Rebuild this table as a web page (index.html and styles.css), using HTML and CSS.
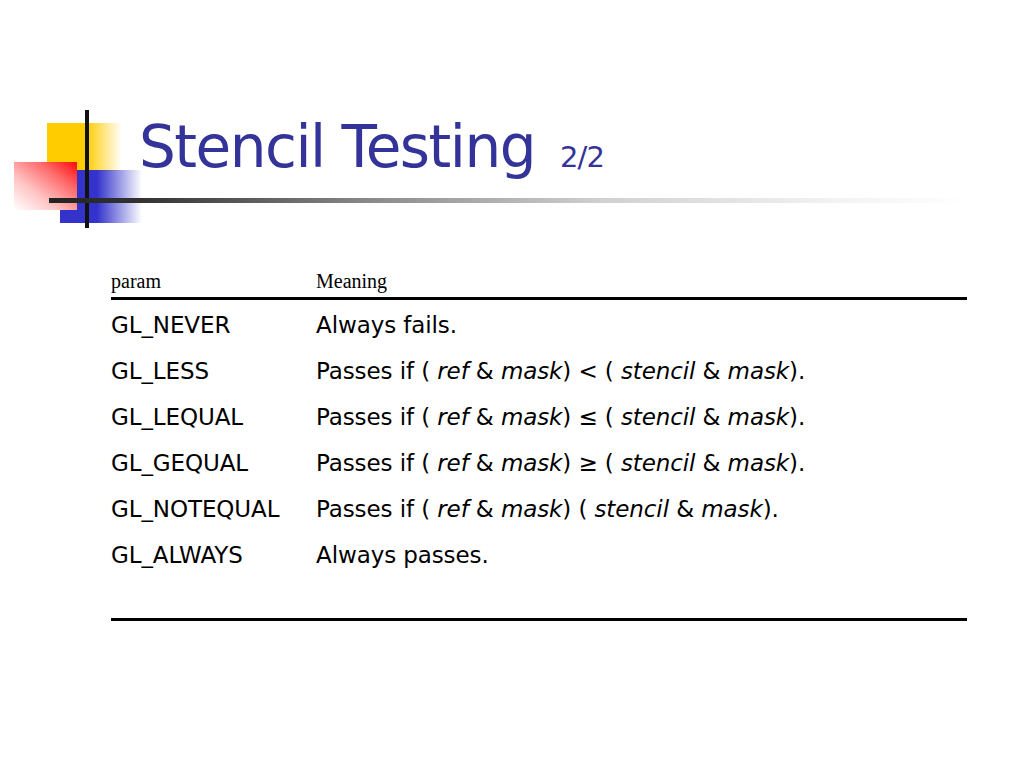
FILE: index.html
```html
<!DOCTYPE html>
<html>
<head>
<meta charset="utf-8">
<link rel="stylesheet" href="styles.css">
</head>
<body>
<div class="slide">
  <div class="logo">
    <div class="sq yellow"></div>
    <div class="sq blue"></div>
    <div class="sq red"></div>
    <div class="vline"></div>
  </div>
  <div class="hline"></div>
  <h1 class="title">Stencil Testing <span class="sub">2/2</span></h1>
  <div class="table">
    <div class="row head"><div class="c1">param</div><div class="c2">Meaning</div></div>
    <div class="row first"><div class="c1">GL_NEVER</div><div class="c2">Always fails.</div></div>
    <div class="row"><div class="c1">GL_LESS</div><div class="c2">Passes if ( <i>ref</i> &amp; <i>mask</i>) &lt; ( <i>stencil</i> &amp; <i>mask</i>).</div></div>
    <div class="row"><div class="c1">GL_LEQUAL</div><div class="c2">Passes if ( <i>ref</i> &amp; <i>mask</i>) ≤ ( <i>stencil</i> &amp; <i>mask</i>).</div></div>
    <div class="row"><div class="c1">GL_GEQUAL</div><div class="c2">Passes if ( <i>ref</i> &amp; <i>mask</i>) ≥ ( <i>stencil</i> &amp; <i>mask</i>).</div></div>
    <div class="row"><div class="c1">GL_NOTEQUAL</div><div class="c2">Passes if ( <i>ref</i> &amp; <i>mask</i>) ( <i>stencil</i> &amp; <i>mask</i>).</div></div>
    <div class="row"><div class="c1">GL_ALWAYS</div><div class="c2">Always passes.</div></div>
    <div class="bottom"></div>
  </div>
</div>
</body>
</html>
```
FILE: styles.css
```css
html, body { margin: 0; padding: 0; background: #fff; }
.slide { position: relative; width: 1024px; height: 768px; overflow: hidden; }
.logo { position: absolute; left: 0; top: 0; width: 150px; height: 240px; }
.sq { position: absolute; }
.yellow { left: 47px; top: 123px; width: 75px; height: 48px;
  background: linear-gradient(to right, #ffcc00 0%, #ffcc00 52%, rgba(255,204,0,0) 100%); }
.blue { left: 60px; top: 170px; width: 82px; height: 53px;
  background: linear-gradient(to right, #3333cc 0%, #3333cc 45%, rgba(51,51,204,0) 100%); }
.red { left: 14px; top: 162px; width: 63px; height: 48px;
  background: linear-gradient(to bottom left, #ff0a0a 0%, #ff6a6a 30%, #ffc4c4 65%, #ffffff 100%); }
.vline { position: absolute; left: 85px; top: 110px; width: 4px; height: 118px; background: #111; }
.hline { position: absolute; left: 49px; top: 198px; width: 920px; height: 5px;
  background: linear-gradient(to right, #222 0%, #333 10%, #8a8a8a 35%, #d0d0d0 60%, #f2f2f2 85%, rgba(255,255,255,0) 100%); }
.title { position: absolute; left: 139px; top: 113px; margin: 0;
  font-family: "DejaVu Sans", sans-serif; font-weight: normal; font-size: 58px;
  letter-spacing: -1.5px; color: #333399; white-space: nowrap; }
.sub { font-size: 29px; letter-spacing: -0.8px; margin-left: 8px; }
.table { position: absolute; left: 111px; top: 270px; width: 856px; }
.row { display: flex; height: 46px; align-items: center;
  font-family: "DejaVu Sans", sans-serif; font-size: 23px; letter-spacing: -0.1px; color: #000; }
.row i { font-style: italic; }
.row.head { height: 30px; align-items: flex-start; border-bottom: 3px solid #000;
  font-family: "Liberation Serif", serif; font-size: 20px; letter-spacing: 0; padding-top: 0; box-sizing: border-box; }
.row.first { margin-top: 2px; }
.c1 { width: 205px; }
.c2 { flex: 1; }
.bottom { margin-top: 40px; border-top: 3px solid #000; }
```
